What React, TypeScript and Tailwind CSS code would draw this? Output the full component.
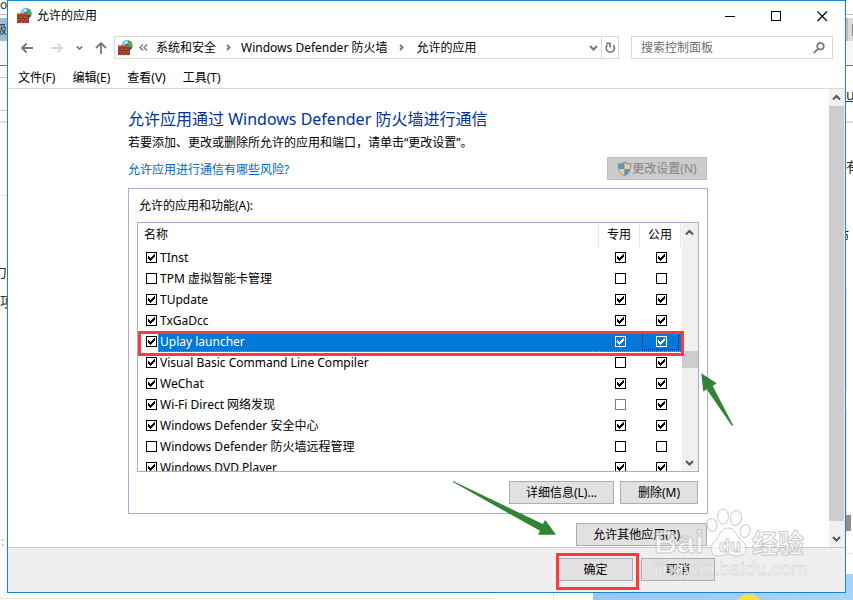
import { useState } from 'react'
import type { ReactNode } from 'react'
import clsx from 'clsx'

interface AppRule {
  name: string
  enabled: boolean
  isPrivate: boolean
  isPublic: boolean
  locked?: boolean
}

const RULES: AppRule[] = [
  { name: 'TInst', enabled: true, isPrivate: true, isPublic: true },
  { name: 'TPM 虚拟智能卡管理', enabled: false, isPrivate: false, isPublic: false },
  { name: 'TUpdate', enabled: true, isPrivate: true, isPublic: true },
  { name: 'TxGaDcc', enabled: true, isPrivate: true, isPublic: true },
  { name: 'Uplay launcher', enabled: true, isPrivate: true, isPublic: true },
  { name: 'Visual Basic Command Line Compiler', enabled: true, isPrivate: false, isPublic: true },
  { name: 'WeChat', enabled: true, isPrivate: true, isPublic: true },
  { name: 'Wi-Fi Direct 网络发现', enabled: true, isPrivate: false, isPublic: true, locked: true },
  { name: 'Windows Defender 安全中心', enabled: true, isPrivate: true, isPublic: true },
  { name: 'Windows Defender 防火墙远程管理', enabled: false, isPrivate: false, isPublic: false },
  { name: 'Windows DVD Player', enabled: true, isPrivate: true, isPublic: true },
]

const MENU = ['文件(F)', '编辑(E)', '查看(V)', '工具(T)']

function FirewallIcon() {
  return (
    <svg width="16" height="16" viewBox="0 0 16 16" className="shrink-0" aria-hidden="true">
      <circle cx="10.2" cy="5.4" r="5.4" fill="#1f6fd0" />
      <path d="M5.8 3C7.2 .9 9.4 .2 11.4 .3L10.8 2.8 8.4 4.2 6.7 6.3 5 5.6Z" fill="#8fd8f5" />
      <path d="M10.7 .8 13.8 2 15.4 5 14.4 7.4 12.6 5.4 10.4 4.2Z" fill="#4dbb35" />
      <path d="M8.4 1.8 11 1.4 10.2 3.4 8.4 4Z" fill="#e4faee" />
      <path d="M12.9 7.5 15 7.2 13.2 9.8Z" fill="#123f94" />
      <rect x="1" y="5.5" width="12" height="9.6" fill="#a5482f" />
      <path d="M1 6H13" stroke="#cf7458" />
      <path d="M1 8H13M1 10.5H13M1 13H13" stroke="#6e2c1b" strokeWidth=".6" />
      <path d="M5 5.5V8M9 5.5V8M3 8V10.5M7 8V10.5M11 8V10.5M5 10.5V13M9 10.5V13M3 13V15M7 13V15M11 13V15" stroke="#6e2c1b" strokeWidth=".6" />
      <path d="M1.4 9.2H2.6M3.6 9.2H6.4M7.6 9.2H10.4M1.6 11.7H4.4M5.6 11.7H8.4M9.6 11.7H12.6M3.6 14H6.4M7.6 14H10.4" stroke="#c2644a" strokeWidth=".8" />
    </svg>
  )
}

function ShieldIcon() {
  return (
    <svg width="15" height="16" viewBox="0 0 15 16" aria-hidden="true">
      <path d="M7.5.4C9.5 1.8 12 2.3 14.3 2.3 14.5 8.5 12.7 13.2 7.5 15.6 2.3 13.2.5 8.5.7 2.3 3 2.3 5.5 1.8 7.5.4Z" fill="#8f959b" />
      <path d="M7.5 2V8H2C1.9 6.6 1.9 5 2 3.6 4 3.5 6 3 7.5 2Z" fill="#5e93c9" />
      <path d="M7.5 2V8H13C13.1 6.6 13.1 5 13 3.6 11 3.5 9 3 7.5 2Z" fill="#f0cf8a" />
      <path d="M7.5 8H2C2.5 10.8 4.2 13 7.5 14.4Z" fill="#f0cf8a" />
      <path d="M7.5 8H13C12.5 10.8 10.8 13 7.5 14.4Z" fill="#5e93c9" />
    </svg>
  )
}

function Chevron({ dir, className = '' }: { dir: 'up' | 'down' | 'right'; className?: string }) {
  const d = {
    up: 'M1 6.5 4.5 3 8 6.5',
    down: 'M1 3 4.5 6.5 8 3',
    right: 'M3 2 5.5 4.5 3 7',
  }[dir]
  return (
    <svg width="9" height="9" viewBox="0 0 9 9" fill="none" stroke="currentColor" strokeWidth="2" className={className} aria-hidden="true">
      <path d={d} />
    </svg>
  )
}

function Arrow({ dir }: { dir: 'left' | 'right' | 'up' }) {
  const d = {
    left: 'M13 7H2M6.5 2.5 2 7 6.5 11.5',
    right: 'M1 7H12M7.5 2.5 12 7 7.5 11.5',
    up: 'M7 13V2M2 7 7 2 12 7',
  }[dir]
  return (
    <svg width="14" height="14" viewBox="0 0 14 14" fill="none" stroke="currentColor" strokeWidth="1.8" aria-hidden="true">
      <path d={d} />
    </svg>
  )
}

interface CheckBoxProps {
  label: string
  defaultChecked: boolean
  inverted?: boolean
  disabled?: boolean
}

function CheckBox({ label, defaultChecked, inverted, disabled }: CheckBoxProps) {
  return (
    <span className={clsx('mt-[5px] grid size-[11px] shrink-0', inverted ? 'text-white' : disabled ? 'text-[#808080]' : 'text-black')}>
      <input
        type="checkbox"
        aria-label={label}
        defaultChecked={defaultChecked}
        disabled={disabled}
        className="peer col-start-1 row-start-1 size-[11px] appearance-none border border-current"
      />
      <svg
        width="11"
        height="11"
        shapeRendering="crispEdges"
        className="pointer-events-none invisible col-start-1 row-start-1 fill-current peer-checked:visible"
        aria-hidden="true"
      >
        <path d="M2 4H3V5H4V6H5V5H6V4H7V3H8V2H9V5H8V6H7V7H6V8H5V9H4V8H3V7H2Z" />
      </svg>
    </span>
  )
}

function PushButton({ children, className = '' }: { children: ReactNode; className?: string }) {
  return (
    <button type="button" className={clsx('h-[23px] border border-[#adadad] bg-[#e1e1e1] text-center leading-[21px]', className)}>
      {children}
    </button>
  )
}

function TitleBar() {
  return (
    <header className="flex h-[30px] shrink-0 items-center pl-2">
      <FirewallIcon />
      <h1 className="ml-[5px] flex-1">允许的应用</h1>
      <div className="flex h-full">
        <button type="button" aria-label="最小化" className="grid w-[45px] place-items-center">
          <svg width="11" height="11" stroke="#000"><path d="M0 5.5H10" /></svg>
        </button>
        <button type="button" aria-label="最大化" className="grid w-[46px] place-items-center">
          <svg width="11" height="11" fill="none" stroke="#000"><rect x=".5" y=".5" width="9" height="9" /></svg>
        </button>
        <button type="button" aria-label="关闭" className="grid w-[46px] place-items-center">
          <svg width="11" height="11" stroke="#000" strokeWidth="1.1"><path d="M.5 .5 10 10M10 .5 .5 10" /></svg>
        </button>
      </div>
    </header>
  )
}

function NavBar() {
  return (
    <nav className="flex h-[36px] shrink-0 items-start pt-[5px] pr-3 pl-3 text-[#777]">
      <div className="flex h-[23px] items-center">
        <button type="button" aria-label="后退"><Arrow dir="left" /></button>
        <button type="button" aria-label="前进" className="ml-4 text-[#d8d8d8]"><Arrow dir="right" /></button>
        <button type="button" aria-label="最近的位置" className="ml-3"><Chevron dir="down" className="size-[7px]" /></button>
        <button type="button" aria-label="向上" className="ml-[11px]"><Arrow dir="up" /></button>
      </div>
      <div className="ml-[6px] flex h-[23px] flex-1 border border-[#d9d9d9]">
        <div className="flex flex-1 items-center pl-[2px] text-black">
          <FirewallIcon />
          <svg width="9" height="7" fill="none" stroke="#777" strokeWidth="1.4" className="ml-[6px]" aria-hidden="true">
            <path d="M4 .5 1 3.5 4 6.5M8 .5 5 3.5 8 6.5" />
          </svg>
          <a href="#security" className="ml-2">系统和安全</a>
          <Chevron dir="right" className="mx-2 text-[#777]" />
          <a href="#firewall">Windows Defender 防火墙</a>
          <Chevron dir="right" className="mx-[10px] text-[#777]" />
          <a href="#apps">允许的应用</a>
          <button type="button" aria-label="历史记录" className="mr-[3px] ml-auto text-[#777]"><Chevron dir="down" /></button>
        </div>
        <button type="button" aria-label="刷新" className="grid w-[17px] place-items-center border-l border-[#d9d9d9] pl-px">
          <svg width="11" height="12" viewBox="0 0 11 12" fill="none" stroke="#777" strokeWidth="1.7" aria-hidden="true">
            <path d="M2.4 3.2A4.1 4.1 0 1 0 8.2 3.1" />
            <path d="M1 1.4H5V5.4" />
          </svg>
        </button>
      </div>
      <label className="ml-3 flex h-[23px] w-[202px] items-center border border-[#d9d9d9] pr-[7px] pl-[9px]">
        <input type="search" aria-label="搜索控制面板" placeholder="搜索控制面板" className="min-w-0 flex-1 outline-none placeholder:text-[#6d6d6d]" />
        <svg width="12" height="12" viewBox="0 0 12 12" fill="none" stroke="#777" strokeWidth="1.7" aria-hidden="true">
          <circle cx="7.5" cy="4.2" r="3.3" />
          <path d="M5.2 6.7.7 11.2" />
        </svg>
      </label>
    </nav>
  )
}

function RuleRow({ rule, selected, onSelect }: { rule: AppRule; selected: boolean; onSelect: () => void }) {
  return (
    <tr className="relative h-[21px]" onClick={onSelect}>
      <td className="p-0">
        <label className="flex h-[21px] items-start pl-2">
          <CheckBox label={rule.name} defaultChecked={rule.enabled} />
          <span
            className={clsx(
              'ml-px h-[21px] flex-1 pl-[2px] leading-[22px] whitespace-nowrap',
              selected && 'border-b border-l border-dotted border-[#c98a58] bg-[#0078d7] pl-px text-white',
            )}
          >
            {rule.name}
          </span>
        </label>
        {selected && <span className="pointer-events-none absolute top-0 right-[-2px] -bottom-1 left-0 z-10 border-3 border-[#ff3838]" />}
      </td>
      <td className="p-0">
        <div className={clsx('flex h-[21px] items-start pl-4', selected && 'border-b border-dotted border-[#c98a58] bg-[#0078d7]')}>
          <CheckBox label={`${rule.name} 专用`} defaultChecked={rule.isPrivate} inverted={selected} disabled={rule.locked} />
        </div>
      </td>
      <td className="p-0">
        <div className={clsx('h-[21px]', selected && 'border-b border-dotted border-[#c98a58] bg-[#0078d7] pr-[3px] pl-[2px]')}>
          <div className={clsx('flex items-start', selected ? 'h-[19px] border border-t-0 border-dotted border-[#2b1a00] pl-[13px]' : 'pl-4')}>
            <CheckBox label={`${rule.name} 公用`} defaultChecked={rule.isPublic} inverted={selected} />
          </div>
        </div>
      </td>
    </tr>
  )
}

function RuleList() {
  const [selected, setSelected] = useState('Uplay launcher')

  return (
    <div className="flex h-[250px] overflow-hidden border border-[#aaaad5]">
      <div className="flex-1">
        <table className="w-full table-fixed border-collapse">
          <thead>
            <tr className="h-6 text-left leading-6">
              <th className="p-0 font-normal"><div className="border-r border-[#e5e5e5] pl-[6px]">名称</div></th>
              <th className="w-[41px] p-0 font-normal"><div className="border-r border-[#e5e5e5] pl-2">专用</div></th>
              <th className="w-[42px] p-0 font-normal"><div className="mr-px border-r border-[#e5e5e5] pl-2">公用</div></th>
            </tr>
          </thead>
          <tbody>
            {RULES.map((rule) => (
              <RuleRow key={rule.name} rule={rule} selected={rule.name === selected} onSelect={() => setSelected(rule.name)} />
            ))}
          </tbody>
        </table>
      </div>
      <div className="flex w-4 flex-col items-center bg-[#f0f0f0] text-[#555]">
        <Chevron dir="up" className="mt-[5px] mr-px" />
        <div className="mt-[114px] h-[17px] w-full bg-[#cdcdcd]" />
        <Chevron dir="down" className="mt-auto mr-px mb-1" />
      </div>
    </div>
  )
}

function Content() {
  return (
    <main className="min-w-0 flex-1 overflow-hidden pt-[19px] pr-[121px] pl-[120px]">
      <h2 className="text-base leading-[22px] whitespace-nowrap text-[#003399]">允许应用通过 Windows Defender 防火墙进行通信</h2>
      <p className="pt-px leading-6 whitespace-nowrap">若要添加、更改或删除所允许的应用和端口，请单击“更改设置”。</p>
      <div className="mt-[2px] flex items-center justify-between">
        <a href="#risks" className="pt-[2px] text-[#0066cc]">允许应用进行通信有哪些风险?</a>
        <button type="button" disabled className="mr-px flex h-[23px] w-[100px] items-center justify-center border border-[#bfbfbf] bg-[#cccccc] text-[#838383]">
          <ShieldIcon />
          更改设置(N)
        </button>
      </div>
      <section className="mt-2 border border-[#aaaad5] px-2 pb-[9px]">
        <h3 className="py-2 pl-[2px] leading-[17px]">允许的应用和功能(A):</h3>
        <RuleList />
        <div className="mt-[9px] mr-px flex justify-end gap-[6px]">
          <PushButton className="w-[105px]">详细信息(L)...</PushButton>
          <PushButton className="w-[78px]">删除(M)</PushButton>
        </div>
      </section>
      <div className="mt-[9px] mr-px flex justify-end">
        <PushButton className="w-[131px]">允许其他应用(R)...</PushButton>
      </div>
    </main>
  )
}

// slivers of the browser page behind the dialog
function LeftEdge() {
  return (
    <div className="flex w-[7px] shrink-0 flex-col overflow-hidden bg-white text-[#333]" aria-hidden="true">
      <div className="h-[15px] border-b border-[#bbb] leading-[10px]">o/</div>
      <div className="mt-[3px] flex h-[23px] justify-end bg-[#9fbcd8] leading-6">级</div>
      <div className="h-[25px] border-b border-[#777] bg-[#f7f7f7]" />
      <div className="h-3 border-b border-[#ccc]" />
      <div className="h-[33px] border-b border-[#ccc]" />
      <div className="h-3 border-b-2 border-[#ddd]" />
      <div className="h-[73px] border-b border-[#e8e8e8]" />
      <div className="mt-[66px] flex h-5 justify-end text-sm leading-5">力</div>
      <div className="mt-[10px] h-5 text-sm leading-5">项</div>
      <div className="mt-[168px] flex-1 bg-[#fbfdfc] pt-[54px] pl-px text-[#9aa8b5]">:</div>
    </div>
  )
}

function RightEdge() {
  return (
    <div className="flex w-[7px] shrink-0 flex-col overflow-hidden bg-white text-[#333]" aria-hidden="true">
      <div className="h-[15px] border-b border-[#bbb]" />
      <div className="mt-[3px] h-[23px] border-l-2 border-[#bbb] bg-[#dcdcdc] pt-[6px] pl-1"><div className="h-3 w-px bg-[#888]" /></div>
      <div className="h-[25px] border-b border-[#777] bg-[#f7f7f7]" />
      <div className="mt-5 h-[18px] text-sm leading-[18px] underline">us</div>
      <div className="h-[19px] border-b-2 border-[#ddd]" />
      <div className="mt-[34px] h-5 text-sm leading-5">有</div>
      <div className="mt-[51px] flex h-5 justify-end pr-1 text-[#0000cc]">布</div>
      <div className="mt-[41px] h-[101px] w-px bg-[#e3e8f0]" />
      <div className="mt-5 h-[104px] w-px bg-[#e3e8f0]" />
      <div className="mt-px h-4 w-[5px] bg-[#8e8e8e]" />
      <div className="mt-[22px] h-px bg-[#e5e5e5]" />
      <div className="mt-5 flex-1 bg-[#a3d3fa]" />
    </div>
  )
}

function Watermark() {
  return (
    <svg
      width="160"
      height="78"
      viewBox="0 0 160 78"
      className="pointer-events-none absolute right-[42px] bottom-[15px] overflow-visible"
      aria-hidden="true"
    >
      <g fill="#fff" fillOpacity=".7" stroke="#bdbdbd" strokeOpacity=".8" fontFamily='"Liberation Sans", "Noto Sans CJK SC", sans-serif'>
        <ellipse cx="61" cy="18" rx="5" ry="6.5" transform="rotate(-15 61 18)" />
        <ellipse cx="72" cy="9.5" rx="5.5" ry="7.5" />
        <ellipse cx="85" cy="11" rx="5.5" ry="7.5" transform="rotate(10 85 11)" />
        <ellipse cx="94" cy="24" rx="5" ry="6.5" transform="rotate(15 94 24)" />
        <path d="M77 21C85 21 85 29 91 34 98 39 95 49 87 49 82 49 81 47 77 47 73 47 72 49 67 49 59 49 58 40 63 35 69 30 69 21 77 21Z" />
        <text x="3" y="46" fontSize="32" fontWeight="bold">Bai</text>
        <text x="68" y="45" fontSize="18" fontWeight="bold">du</text>
        <text x="101" y="46" fontSize="26" fontWeight="bold">经验</text>
      </g>
      <text x="3" y="68" fontSize="19" fill="#fff" fillOpacity=".85" stroke="#bdbdbd" strokeOpacity=".5" strokeWidth=".8" fontFamily='"Liberation Sans", sans-serif'>
        jingyan.baidu.com
      </text>
    </svg>
  )
}

function Annotations() {
  return (
    <svg width="853" height="600" viewBox="0 0 853 600" fill="#318532" className="pointer-events-none absolute top-0 left-0" aria-hidden="true">
      <path d="M453 481 542.7 524 545.3 520 556 534.7H538L540 530.7 508 513 453 482Z" />
      <path d="M701.3 373.3 716.7 383.3 712.7 386 733 425 732 426 706.7 389.3 703.3 391.5Z" />
    </svg>
  )
}

export default function App() {
  return (
    <div className="relative flex h-screen min-h-[600px] flex-col overflow-hidden bg-white font-['Noto_Sans','Noto_Sans_CJK_SC',sans-serif] text-xs text-black">
      <div className="flex min-h-0 flex-1">
        <LeftEdge />
        <div className="flex min-w-0 flex-1 flex-col border border-[#1a80d3] bg-white">
          <TitleBar />
          <NavBar />
          <div className="flex h-[22px] shrink-0 items-center gap-px border-b border-[#d9d9d9] px-[2px]">
            {MENU.map((item) => (
              <button key={item} type="button" className="px-2">{item}</button>
            ))}
          </div>
          <div className="flex min-h-0 flex-1">
            <Content />
            <div className="flex w-4 shrink-0 flex-col items-center bg-[#f0f0f0] pr-px text-[#555]">
              <Chevron dir="up" className="my-1" />
              <div className="w-full flex-1 bg-[#cdcdcd]" />
              <Chevron dir="down" className="mt-[13px] mb-1" />
            </div>
          </div>
          <footer className="flex h-[45px] shrink-0 justify-end gap-2 border-t border-[#c8c8c8] bg-[#efefef] pt-[10px] pr-[130px]">
            <div className="relative">
              <PushButton className="w-[75px]">确定</PushButton>
              <span className="pointer-events-none absolute -top-[5px] -right-[6px] -left-[2px] h-[37px] border-3 border-[#ff3838]" />
            </div>
            <PushButton className="w-[74px]">取消</PushButton>
          </footer>
        </div>
        <RightEdge />
      </div>
      <div className="flex h-[7px] shrink-0" aria-hidden="true">
        <div className="mt-[5px] w-[493px] border-t border-[#e5e5e5]" />
        <div className="ml-[60px] w-10 border-l border-[#e5e5e5]" />
        <div className="flex flex-1 justify-center overflow-hidden bg-gradient-to-r from-[#92c9f8] to-[#a6d6fb] pl-[52px]">
          <div className="mt-px size-[26px] rounded-full bg-[#fde047]" />
        </div>
      </div>
      <Annotations />
      <Watermark />
    </div>
  )
}
